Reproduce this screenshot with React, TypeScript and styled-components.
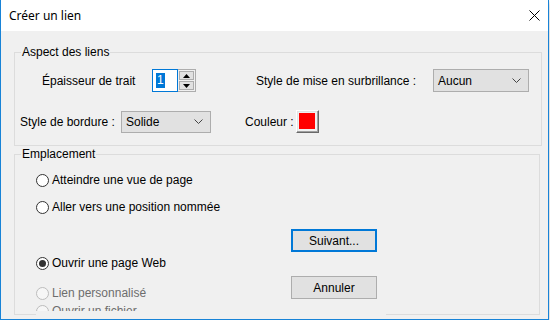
import React from "react";
import styled, { createGlobalStyle } from "styled-components";

const GlobalStyle = createGlobalStyle`
  html, body { margin: 0; padding: 0; background: #ffffff; }
  body { font-family: "Liberation Sans", Arial, sans-serif; font-size: 12px; color: #000; }
  * { box-sizing: border-box; }
`;

const Window = styled.div`
  width: 549px;
  border: 1px solid #1883d7;
  border-top: none;
  background: #f0f0f0;
  box-shadow: 0 2px 5px rgba(0, 0, 0, 0.28);
`;

const TitleBar = styled.div`
  height: 31px;
  background: #ffffff;
  display: flex;
  align-items: center;
  justify-content: space-between;
  padding-left: 8px;
`;

const Title = styled.span`
  font-family: "Noto Sans", "Segoe UI", sans-serif;
  font-size: 12px;
  color: #000;
`;

const CloseBox = styled.div`
  width: 27px;
  height: 31px;
  display: flex;
  align-items: center;
  justify-content: center;
`;

const Body = styled.div`
  height: 288px;
  padding: 21px 0 0 13px;
  display: flex;
  flex-direction: column;
  gap: 8px;
`;

const Group = styled.div<{ $w: number }>`
  position: relative;
  width: ${(p) => p.$w}px;
  border: 1px solid #dcdcdc;
`;

const Legend = styled.span`
  position: absolute;
  z-index: 1;
  top: -8px;
  left: 6px;
  padding: 0 1px;
  line-height: 14px;
  background: #f0f0f0;
  color: #000;
`;

const AspectContent = styled.div`
  padding: 16px 0 12px 0;
  display: flex;
  flex-direction: column;
  gap: 18px;
`;

const Row = styled.div<{ $indent: number }>`
  display: flex;
  align-items: center;
  height: 23px;
  padding-left: ${(p) => p.$indent}px;
`;

const Label = styled.span<{ $w: number; $ml?: number }>`
  width: ${(p) => p.$w}px;
  margin-left: ${(p) => p.$ml ?? 0}px;
  white-space: nowrap;
  flex: none;
`;

const Spinner = styled.div`
  display: flex;
  height: 23px;
  flex: none;
`;

const SpinInput = styled.div`
  width: 26px;
  height: 23px;
  border: 1px solid #0078d7;
  background: #fff;
  padding: 3px 0 0 3px;
`;

const Selected = styled.span`
  display: inline-block;
  background: #0078d7;
  color: #fff;
  height: 15px;
  line-height: 15px;
  padding: 0 1px;
`;

const SpinButtons = styled.div`
  width: 18px;
  height: 23px;
  border: 1px solid #adadad;
  border-left: none;
  padding: 1px;
  display: flex;
  flex-direction: column;
  gap: 1px;
`;

const SpinButton = styled.div`
  flex: 1;
  background: #e1e1e1;
  border: 1px solid #adadad;
  display: flex;
  align-items: center;
  justify-content: center;
`;

const Select = styled.div<{ $w: number; $h: number }>`
  width: ${(p) => p.$w}px;
  height: ${(p) => p.$h}px;
  flex: none;
  background: #e1e1e1;
  border: 1px solid #adadad;
  display: flex;
  align-items: center;
  justify-content: space-between;
  padding: 0 7px 0 4px;
`;

const ColorButton = styled.div`
  width: 23px;
  height: 23px;
  flex: none;
  border: 1px solid;
  border-color: #ffffff #696969 #696969 #ffffff;
  box-shadow: inset -1px -1px 0 #a0a0a0, inset 1px 1px 0 #e3e3e3;
  padding: 2px 3px 3px 2px;
`;

const Swatch = styled.div<{ $c: string }>`
  width: 100%;
  height: 100%;
  background: ${(p) => p.$c};
`;

const LocationContent = styled.div`
  display: flex;
  padding-left: 21px;
`;

const Panel = styled.div`
  width: 350px;
  height: 161px;
  margin-bottom: -2px;
  background: #f0f0f0;
  display: grid;
  grid-template-columns: 255px 86px;
`;

const RadioColumn = styled.div`
  display: flex;
  flex-direction: column;
  padding-top: 18px;
`;

const RadioRow = styled.div<{ $mt: number; $clip?: number }>`
  margin-top: ${(p) => p.$mt}px;
  height: ${(p) => p.$clip ?? 14}px;
  overflow: hidden;
  flex: none;
`;

const RadioInner = styled.div<{ $disabled?: boolean }>`
  height: 14px;
  display: flex;
  align-items: center;
  gap: 3px;
  color: ${(p) => (p.$disabled ? "#6d6d6d" : "#000")};
  white-space: nowrap;
`;

const Circle = styled.span<{ $disabled?: boolean; $checked?: boolean }>`
  width: 13px;
  height: 13px;
  flex: none;
  border-radius: 50%;
  border: 1px solid ${(p) => (p.$disabled ? "#bcbcbc" : "#333333")};
  background: ${(p) => (p.$disabled ? "#f6f6f6" : "#ffffff")};
  display: flex;
  align-items: center;
  justify-content: center;
  &::after {
    content: "";
    display: ${(p) => (p.$checked ? "block" : "none")};
    width: 7px;
    height: 7px;
    border-radius: 50%;
    background: #333333;
  }
`;

const ButtonColumn = styled.div`
  display: flex;
  flex-direction: column;
  padding-top: 74px;
  gap: 24px;
`;

const Button = styled.div<{ $default?: boolean }>`
  width: 86px;
  height: 23px;
  background: #e1e1e1;
  border: ${(p) => (p.$default ? "2px solid #0078d7" : "1px solid #adadad")};
  display: flex;
  align-items: center;
  justify-content: center;
`;

const Chevron = () => (
  <svg width="9" height="5" viewBox="0 0 9 5">
    <path d="M0.5 0.5 L4.5 4.5 L8.5 0.5" fill="none" stroke="#444" strokeWidth="1" />
  </svg>
);

const Radio = ({
  label,
  mt,
  checked,
  disabled,
  clip,
}: {
  label: string;
  mt: number;
  checked?: boolean;
  disabled?: boolean;
  clip?: number;
}) => (
  <RadioRow $mt={mt} $clip={clip}>
    <RadioInner $disabled={disabled}>
      <Circle $disabled={disabled} $checked={checked} />
      <span>{label}</span>
    </RadioInner>
  </RadioRow>
);

export default function App() {
  return (
    <>
      <GlobalStyle />
      <Window>
        <TitleBar>
          <Title>Créer un lien</Title>
          <CloseBox>
            <svg width="11" height="11" viewBox="0 0 11 11">
              <path d="M0.5 0.5 L10.5 10.5 M10.5 0.5 L0.5 10.5" stroke="#000" strokeWidth="1" />
            </svg>
          </CloseBox>
        </TitleBar>
        <Body>
          <Group $w={528}>
            <Legend>Aspect des liens</Legend>
            <AspectContent>
              <Row $indent={27}>
                <Label $w={110}>Épaisseur de trait</Label>
                <Spinner>
                  <SpinInput>
                    <Selected>1</Selected>
                  </SpinInput>
                  <SpinButtons>
                    <SpinButton>
                      <svg width="7" height="4" viewBox="0 0 7 4">
                        <path d="M3.5 0 L7 4 L0 4 Z" fill="#000" />
                      </svg>
                    </SpinButton>
                    <SpinButton>
                      <svg width="7" height="4" viewBox="0 0 7 4">
                        <path d="M0 0 L7 0 L3.5 4 Z" fill="#000" />
                      </svg>
                    </SpinButton>
                  </SpinButtons>
                </Spinner>
                <Label $w={177} $ml={60}>Style de mise en surbrillance :</Label>
                <Select $w={96} $h={23}>
                  <span>Aucun</span>
                  <Chevron />
                </Select>
              </Row>
              <Row $indent={5}>
                <Label $w={101}>Style de bordure :</Label>
                <Select $w={90} $h={22}>
                  <span>Solide</span>
                  <Chevron />
                </Select>
                <Label $w={51} $ml={34}>Couleur :</Label>
                <ColorButton>
                  <Swatch $c="#ff0000" />
                </ColorButton>
              </Row>
            </AspectContent>
          </Group>
          <Group $w={526}>
            <Legend>Emplacement</Legend>
            <LocationContent>
              <Panel>
                <RadioColumn>
                  <Radio label="Atteindre une vue de page" mt={0} />
                  <Radio label="Aller vers une position nommée" mt={13} />
                  <Radio label="Ouvrir une page Web" mt={42} checked />
                  <Radio label="Lien personnalisé" mt={16} disabled />
                  <Radio label="Ouvrir un fichier" mt={4} disabled clip={7} />
                </RadioColumn>
                <ButtonColumn>
                  <Button $default>Suivant...</Button>
                  <Button>Annuler</Button>
                </ButtonColumn>
              </Panel>
            </LocationContent>
          </Group>
        </Body>
      </Window>
    </>
  );
}
